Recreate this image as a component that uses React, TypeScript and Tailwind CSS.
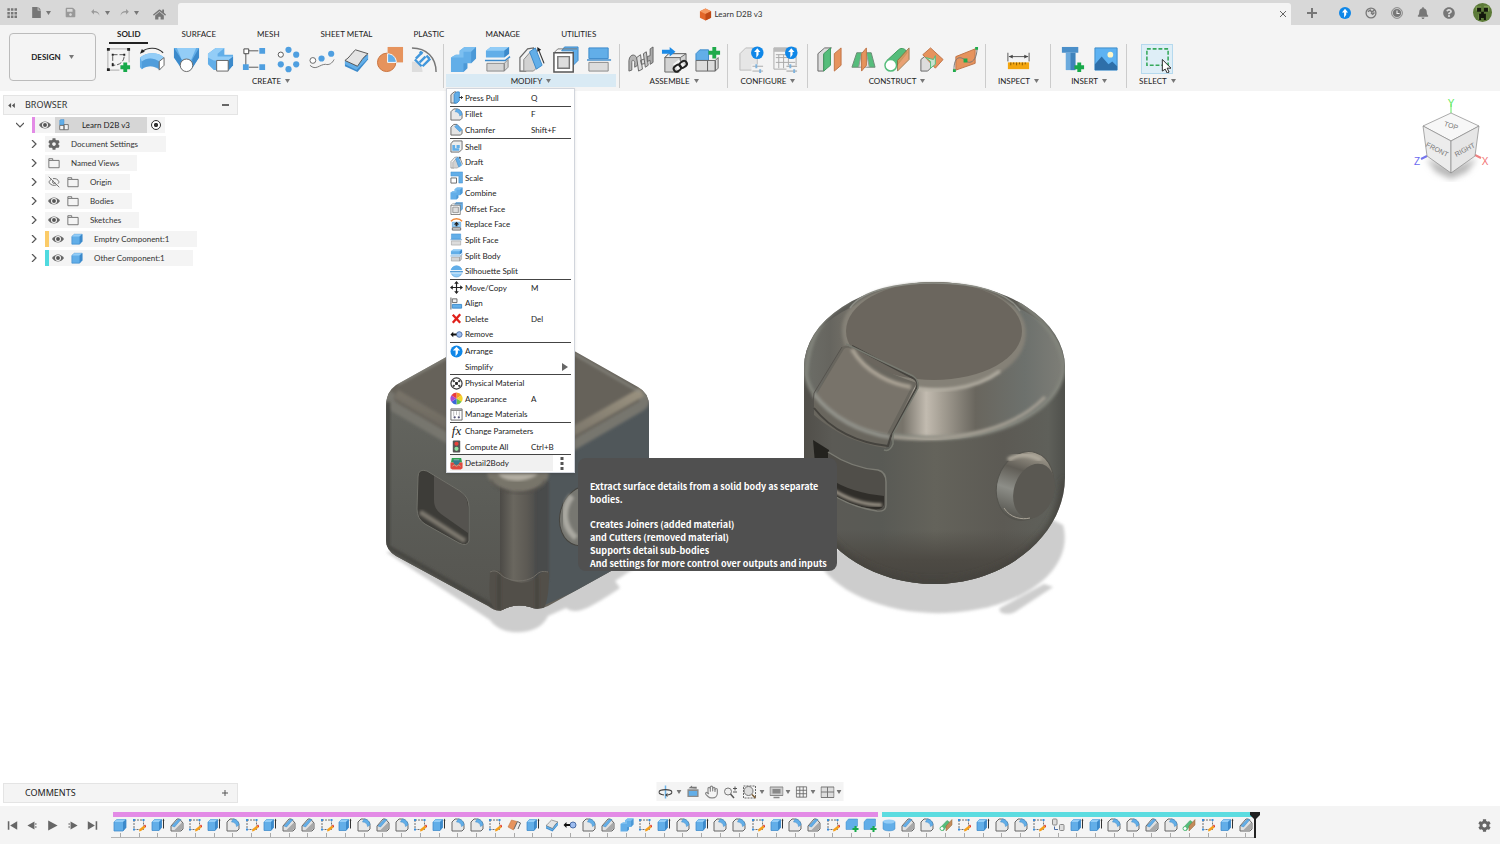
import { useState, type ReactNode } from 'react'
import { FaBell, FaCog, FaHome, FaQuestionCircle, FaSave } from 'react-icons/fa'
import { EyeOff, Hand } from 'lucide-react'

const B = '#62aee8'
const BL = '#93cdf7'
const BD = '#3c8acb'
const G = '#666666'
const L = '#dcdcdc'
const O = '#e6935d'
const GR = '#55bd7b'

const plus = <path d="M21 17v10M16 22h10" stroke="#17a94a" strokeWidth="4" />

const bolt = (cx: number, cy: number, r: number) => (
  <>
    <circle cx={cx} cy={cy} r={r} fill="#0f87e8" />
    <path
      d={`M${cx} ${cy - r * 0.7}l${r * 0.5} ${r * 0.6}h${-r * 0.3}v${r * 0.4}l${-r * 0.35} ${r * 0.5}v${-r * 0.9}h${-r * 0.35}z`}
      fill="#fff"
    />
  </>
)

// every drawing uses a 28 x 28 box
const drawings: Record<string, ReactNode> = {
  newSketch: (
    <>
      <path d="M3 3h22v14M3 3v22h12" stroke="#aaa" fill="none" />
      <path d="M8 9h12c0 7-4 11-12 11z" stroke="#555" fill="none" strokeDasharray="5 2" />
      <path d="M2 2h3v3H2zM23 2h3v3h-3zM2 23h3v3H2zM7 8h2v2H7zM7 18h2v3H7zM19 8h2v2h-2z" fill="#222" />
      {plus}
    </>
  ),
  revolve: (
    <>
      <path d="M3 6C9 1 19 1 25 7" stroke="#333" fill="none" strokeWidth="1.2" />
      <path d="M1 8l2-5 3 3z" fill="#222" />
      <path d="M1 12C8 6 20 6 26 12l-4 3v10C16 20 9 20 3 24l-2-2z" fill={B} />
      <path d="M1 12C8 6 20 6 26 12l-5 4C15 12 8 12 3 16z" fill={BL} />
      <path d="M3 16C8 12 15 12 21 16v9C15 20 9 20 3 24z" fill={BD} opacity=".45" />
      <path d="M21 16l5-4v8l-5 5z" fill="#fff" stroke={G} />
    </>
  ),
  loft: (
    <>
      <path d="M1 2h26v10l-8 12H9L1 12z" fill={B} />
      <path d="M1 2l8 12v9L1 12zM27 2l-7 12v9l7-11z" fill={BD} />
      <path d="M4 2h20l-5 12H9z" fill={BL} />
      <circle cx="14" cy="20" r="6.5" fill="#fff" stroke={G} />
    </>
  ),
  box: (
    <>
      <path d="M1 8l8-6h9v7h9v11l-5 5H7l-6-6z" fill={B} />
      <path d="M1 8l8-6h9l-7 6v3h16l-5 4H7l-6-3z" fill={BL} />
      <path d="M22 15l5-4v9l-5 6z" fill={BD} />
      <path d="M10 15h12v11H10z" fill="#fff" stroke={G} />
    </>
  ),
  rectPattern: (
    <>
      <path d="M8 5h10M5 8v12M8 22h10" stroke="#555" />
      <path d="M3 3h5v5H3z" fill="#fff" stroke="#444" />
      <path d="M19 2h6v6h-6zM2 19h6v6H2zM19 19h6v6h-6z" fill="#4f9fe0" />
    </>
  ),
  circPattern: (
    <g fill="#4f9fe0">
      <circle cx="14" cy="4" r="3.2" />
      <circle cx="22" cy="9" r="3.2" />
      <circle cx="22" cy="19" r="3.2" />
      <circle cx="14" cy="24" r="3.2" />
      <circle cx="6" cy="19" r="3.2" />
      <circle cx="6" cy="9" r="2.7" fill="#fff" stroke="#555" />
    </g>
  ),
  pathPattern: (
    <>
      <path d="M1 20c6 6 10-1 16-1 4 1 7-1 9-5" stroke="#777" fill="none" />
      <circle cx="4" cy="15" r="3" fill="#fff" stroke="#666" />
      <circle cx="13" cy="13" r="3.2" fill="#4f9fe0" />
      <circle cx="23" cy="8" r="3.2" fill="#4f9fe0" />
    </>
  ),
  thicken: (
    <>
      <path d="M2 16v5l13 6 11-13V9z" fill={BD} />
      <path d="M2 15v4l12 6 12-12V9l-9 7-2 5z" fill={B} />
      <path d="M2 15C7 12 9 7 13 4l13 4c-5 3-8 9-11 13z" fill="#e4e4e4" stroke="#555" />
    </>
  ),
  boundary: (
    <>
      <path d="M11 1h16v16H11z" fill={O} />
      <circle cx="10" cy="17" r="9.5" fill={O} stroke="#c9733c" />
      <path d="M11 8c5 0 9 4 9 9h-9z" fill={B} stroke="#fff" />
    </>
  ),
  pressArc: (
    <>
      <path d="M1 2C16 2 26 12 26 27" stroke="#777" fill="none" strokeWidth="1.5" />
      <path d="M1 16c6 0 11 4 11 11H1z" fill="#ddd" />
      <path d="M4 14l7 7M5 13l7-7M9 17l6-6M12 21l8-8M9 6l3 2M16 10l3 3" stroke="#4197dc" strokeWidth="2.5" fill="none" />
    </>
  ),
  combine: (
    <>
      <path d="M1 12l5-3h4V5l5-4h12v12l-5 5h-4v5l-4 4H1z" fill={B} />
      <path d="M1 12l5-3h4V5l5-4h12l-5 5h-8v6z" fill="#7cbff0" />
      <path d="M27 1v12l-5 5V6zM18 18v5l-4 4V18z" fill={BD} opacity=".6" />
    </>
  ),
  splitBody: (
    <>
      <path d="M2 5l5-4h19v7l-5 4H2z" fill={B} />
      <path d="M2 5l5-4h19l-5 4z" fill={BL} />
      <path d="M26 1v7l-5 4V5z" fill={BD} />
      <path d="M1 15h21l5-4" stroke={BD} strokeWidth="1.5" fill="none" />
      <path d="M3 18h18v8H3zM21 18l4-4v8l-4 4z" fill="#d5d5d5" stroke="#888" />
    </>
  ),
  draft: (
    <>
      <path d="M2 26V12l8-9 6-1v5L8 26z" fill="#f2f2f2" stroke={G} strokeWidth="1.2" />
      <path d="M6 26V14l7-8 6 17-3 3z" fill="#d2d2d2" stroke="#888" />
      <path d="M12 6l6-4 7 18-6 4z" fill={B} stroke={BD} />
      <path d="M21 3l6 15" stroke="#333" strokeWidth="1.2" />
      <path d="M20 1l4 3-4 2z" fill="#222" />
    </>
  ),
  offsetFace: (
    <>
      <path d="M10 5l3-4h14v14l-5 5V5z" fill={B} stroke={BD} />
      <path d="M2 7h20v20H2z" fill="#fff" stroke="#555" strokeWidth="1.5" />
      <path d="M6 11h12v12H6z" fill="#ddd" stroke="#777" strokeWidth="1.5" />
      <path d="M2 7l4-4h20" stroke="#777" fill="none" />
    </>
  ),
  splitFace: (
    <>
      <path d="M3 2h20v11H3z" fill={B} stroke={BD} />
      <path d="M1 14.500h25" stroke={BD} strokeWidth="1.5" />
      <path d="M3 17h20v9H3z" fill="#dcdcdc" stroke="#888" />
    </>
  ),
  joint: (
    <>
      <path d="M2 26V15c1-8 8-7 9 0v5l-3 2v-5c-1-3-3-3-3 0v8z" fill="#b5b5b5" stroke={G} />
      <path d="M10 12l4-3 2 15-4 2zM14 15l5-2v5l-4 1z" fill="#ddd" stroke={G} />
      <path d="M17 8l3-2 2 14-3 2z" fill="#c6c6c6" stroke={G} />
      <path d="M21 11l3-1V3l3-2v16l-3 2v-4l-3 1z" fill="#aaa" stroke={G} />
    </>
  ),
  asBuilt: (
    <>
      <path d="M4 12l4-4h18v13l-6 6H4z" fill="#d3d3d3" stroke={G} />
      <path d="M4 12h16l6-4H8zM20 12v15" fill="#eee" stroke={G} />
      <path d="M1 4h8V1l6 5-6 5V8H1z" fill="#1d8be6" />
      <path d="M15 22l6-5M18 26l7-5" stroke="#f4f4f4" strokeWidth="8" />
      <rect x="13" y="20" width="8" height="6" rx="3" transform="rotate(-35 17 23)" fill="none" stroke="#222" strokeWidth="2" />
      <rect x="19" y="16" width="8" height="6" rx="3" transform="rotate(-35 23 19)" fill="none" stroke="#222" strokeWidth="2" />
    </>
  ),
  newComponent: (
    <>
      <path d="M1 8l4-4h9v11H1z" fill={B} stroke={BD} />
      <path d="M1 15h12v11H1zM13 15h8v11h-8zM21 15l3-3v11l-3 3z" fill="#ddd" stroke={G} />
      <path d="M20 1v12M14 7h12" stroke="#1faa4b" strokeWidth="4" />
    </>
  ),
  config: (
    <>
      <path d="M2 25V8l6-6h12v23z" fill="#e6e6e6" stroke="#bbb" />
      <path d="M14 19h13v9H14z" fill="#f4f4f4" />
      <path d="M15 21h11M15 26h11" stroke="#aaa" />
      <path d="M19 19v4M23 24v4" stroke="#7fb3dd" strokeWidth="2" />
      {bolt(20, 7, 6.5)}
    </>
  ),
  configTable: (
    <>
      <path d="M2 2h23v22H2z" fill="#f4f4f4" stroke="#aaa" />
      <path d="M2 2h23v4H2z" fill="#bbb" />
      <path d="M7 9v14M12 9v14M17 9v14M4 12h20M4 17h20M4 9h20" stroke="#aaa" />
      <path d="M15 20h12v8H15z" fill="#f4f4f4" />
      <path d="M15 21h11M15 26h11" stroke="#999" />
      <path d="M19 19v4M23 24v4" stroke="#7fb3dd" strokeWidth="2" />
      {bolt(20, 7, 6.5)}
    </>
  ),
  offsetPlane: (
    <>
      <path d="M2 8l7-6h7L8 9v17H2z" fill="#ddd" stroke={G} />
      <path d="M8 8l7-6v18l-7 6z" fill={GR} stroke="#3d9a5e" />
      <path d="M19 8l7-6v18l-7 6z" fill={O} stroke="#c07446" />
    </>
  ),
  midPlane: (
    <>
      <path d="M2 22L7 7h6l-3 15zM26 22L22 7h-6l2 15z" fill={GR} stroke="#6d8a76" />
      <path d="M9 22l3-15h5l3 15z" fill="#e2e2e2" stroke="#999" />
      <path d="M12 8l5-6v18l-5 6z" fill={O} stroke="#c07446" />
    </>
  ),
  tangentPlane: (
    <>
      <path d="M3 15L15 4c3-3 8-1 9 3L12 22z" fill={GR} stroke="#3d9a5e" />
      <circle cx="7" cy="20" r="6" fill="#fff" stroke={GR} strokeWidth="1.5" />
      <path d="M14 15L26 2v12L14 26z" fill={O} stroke="#8f6a3a" opacity=".85" />
    </>
  ),
  edgePlane: (
    <>
      <path d="M3 26V14l5-4h8v10l-6 6z" fill="#ddd" stroke={G} />
      <path d="M5 9l8-7 13 12-8 9z" fill={O} stroke="#c07446" />
      <path d="M8 12l8 2 2-4v9l-5 4v-7z" fill="#c9e3d1" stroke={GR} />
    </>
  ),
  pathPlane: (
    <>
      <path d="M4 11L24 3v15L4 25z" fill={O} stroke="#c07446" />
      <path d="M2 25c0-16 8-14 12-10 5 5 12 0 12-13" stroke="#777" fill="none" />
      <path d="M1 24h3v3H1zM12 13h4v4h-4zM24 1h3v3h-3z" fill="#1faa4b" />
    </>
  ),
  measure: (
    <>
      <path d="M3 7v9M25 7v9M4 11h20" stroke="#555" />
      <path d="M4 11l4-2v4zM24 11l-4-2v4z" fill="#444" />
      <path d="M3 17h22v7H3z" fill="#f3a50e" />
      <path d="M6 17v3M9 17v2M12 17v3M15 17v2M18 17v3M21 17v2" stroke="#8a5a00" />
    </>
  ),
  insertBolt: (
    <>
      <path d="M3 1h17v6H3z" fill="#4b8fc9" />
      <path d="M7 7h10v18H7z" fill="#6baadd" />
      <path d="M12 7h5v18h-5z" fill="#3f82bb" />
      {plus}
    </>
  ),
  insertImage: (
    <>
      <path d="M2 2h23v23H2z" fill="#5db2f2" stroke="#3d8cc9" />
      <circle cx="18" cy="9" r="3" fill="#fff7c8" />
      <path d="M2 19l7-8 7 8 4-3 5 5v4H2z" fill="#2e6fa9" />
    </>
  ),
  select: (
    <>
      <path d="M3 3h22v17H3z" fill="none" stroke="#36a95c" strokeWidth="1.6" strokeDasharray="4 2" />
      <path d="M19 14v12l3-2 2 4 2-1-2-4h4z" fill="#fff" stroke="#222" />
    </>
  ),
  pressPull: (
    <>
      <path d="M2 26V8l7-6h4v24z" fill={L} stroke={G} strokeWidth="2" />
      <path d="M9 26V7l5-5h6v19l-5 5z" fill={B} stroke={BD} strokeWidth="2" />
      <path d="M20 14h7M24 11l3 3-3 3" stroke="#222" strokeWidth="2" fill="none" />
    </>
  ),
  fillet: (
    <>
      <path d="M2 26V8l6-6h5c8 0 13 6 13 13v7l-4 4z" fill="#e8e8e8" stroke={G} strokeWidth="2" />
      <path d="M11 8l3-6c7 0 12 6 12 12l-5 3C21 12 17 8 11 8z" fill={B} stroke={BD} />
    </>
  ),
  chamferMenu: (
    <>
      <path d="M2 26V9l6-6h7l11 12v8l-4 3z" fill="#e4e4e4" stroke={G} strokeWidth="2" />
      <path d="M10 8l5-5 11 11-5 5z" fill={B} stroke={BD} />
    </>
  ),
  chamfer: (
    <>
      <path d="M2 26V16L14 2h5l7 8v12l-4 4z" fill="#e0e0e0" stroke={G} strokeWidth="2" />
      <path d="M4 16L16 3h6L9 18z" fill={B} stroke={BD} />
      <path d="M8 25L24 9v13l-3 3z" fill="#a9a9a9" />
    </>
  ),
  shell: (
    <>
      <path d="M2 8l5-6h19v18l-6 6H2z" fill="#eee" stroke={G} strokeWidth="2" />
      <path d="M5 11h6v7h9v5H5zM14 11h7v6h-7z" fill={B} />
    </>
  ),
  scale: (
    <>
      <path d="M2 2h25v24h-8V11H2z" fill={B} stroke={BD} />
      <path d="M2 15h12v11H2z" fill="#fff" stroke={G} strokeWidth="2" />
    </>
  ),
  replaceFace: (
    <>
      <path d="M2 7C8 0 20 0 26 7" stroke="#f08a3a" fill="none" strokeWidth="3" />
      <path d="M5 9h18v10H5z" fill={BL} stroke={BD} />
      <path d="M14 8l6 6h-4v4h-4v-4H8z" fill="#222" />
      <path d="M5 21h18v5H5z" fill={L} stroke={G} strokeWidth="2" />
    </>
  ),
  silhouette: (
    <>
      <circle cx="14" cy="14" r="12" fill={BL} stroke={BD} />
      <path d="M2 13a12 12 0 0 1 24 0z" fill={B} />
      <path d="M0 12h28M2 17h24" stroke="#fff" strokeWidth="2" />
      <path d="M0 14.500h28" stroke={BD} strokeWidth="2" />
    </>
  ),
  move: (
    <>
      <path d="M14 4v20M4 14h20" stroke="#222" strokeWidth="2.500" />
      <path d="M14 0l5 6H9zM14 28l5-6H9zM0 14l6-5v10zM28 14l-6-5v10z" fill="#222" />
    </>
  ),
  align: (
    <>
      <path d="M2 1v26" stroke="#555" strokeWidth="2" />
      <path d="M5 4h10v8H5z" fill="#eee" stroke={G} strokeWidth="2" />
      <path d="M5 16h20v8H5z" fill={B} stroke={BD} strokeWidth="2" />
    </>
  ),
  delete: <path d="M6 6l16 17M22 5L6 23" stroke="#e0211b" strokeWidth="5" />,
  remove: (
    <>
      <circle cx="20" cy="14" r="6" fill="#9dbdf0" stroke="#4b6ea8" strokeWidth="2" />
      <path d="M1 14l6-6v4h7v4H7v4z" fill="#111" />
    </>
  ),
  arrange: (
    <>
      <circle cx="14" cy="14" r="13" fill="#0f87e8" />
      <path d="M14 4l8 8h-5v6l-5 6V12H6z" fill="#fff" />
    </>
  ),
  physical: (
    <>
      <circle cx="14" cy="14" r="12" fill="#fff" stroke="#333" strokeWidth="2.500" />
      <path d="M6 6l16 16M22 6L6 22" stroke="#777" strokeWidth="2" />
      <circle cx="14" cy="14" r="3" fill="#222" />
      <circle cx="8" cy="9" r="2.5" fill="#444" />
      <circle cx="20" cy="9" r="2.5" fill="#444" />
      <circle cx="8" cy="19" r="2.5" fill="#444" />
      <circle cx="20" cy="19" r="2.5" fill="#444" />
    </>
  ),
  appearance: (
    <>
      <path d="M14 14V1a13 13 0 0 1 11 6z" fill="#f59b23" />
      <path d="M14 14L25 7a13 13 0 0 1 0 14z" fill="#f3d32b" />
      <path d="M14 14l11 7a13 13 0 0 1-11 6z" fill="#6cc24a" />
      <path d="M14 14v13a13 13 0 0 1-11-6z" fill="#3a66d8" />
      <path d="M14 14L3 21A13 13 0 0 1 3 7z" fill="#a94bd0" />
      <path d="M14 14L3 7a13 13 0 0 1 11-6z" fill="#ea3c3c" />
    </>
  ),
  manage: (
    <>
      <path d="M2 2h24v24H2z" fill="#fff" stroke={G} strokeWidth="2" />
      <path d="M2 5h24" stroke="#888" strokeWidth="3" />
      <path d="M8 7v10M14 7v8M20 7v10" stroke="#bbb" strokeWidth="2" />
      <circle cx="10" cy="20" r="2.500" fill="#557" />
      <circle cx="19" cy="20" r="2.500" fill="#557" />
    </>
  ),
  compute: (
    <>
      <rect x="6" y="1" width="16" height="26" rx="2" fill="#555" />
      <circle cx="14" cy="8" r="4.500" fill="#e8423a" />
      <circle cx="14" cy="19" r="4.500" fill="#8fe0a0" />
    </>
  ),
  detail: (
    <>
      <path d="M4 2h20l2 10H2z" fill="#2f9e52" />
      <path d="M1 12h26v12l-4 3H5l-4-3z" fill="#e0483e" />
      <path d="M6 8c4-4 12-4 16 0l-3 7-5 3-5-3z" fill="#357a8e" />
      <path d="M8 6h12M5 20l4-3 5 3 5-3 4 3" stroke="#9fd6b4" fill="none" strokeWidth="1.500" />
    </>
  ),
  solid: (
    <>
      <path d="M2 8l6-5h18v16l-6 7H2z" fill={B} stroke={BD} strokeWidth="1.500" />
      <path d="M2 8l6-5h18l-6 5z" fill={BL} />
      <path d="M26 3v16l-6 7V8z" fill={BD} />
    </>
  ),
  sketch: (
    <>
      <path d="M4 4h19v19H4z" fill="none" stroke="#444" strokeWidth="1.500" strokeDasharray="4 2" />
      <path d="M2 2h4v4H2zM21 2h4v4h-4zM2 21h4v4H2z" fill="#3b8edb" />
      <path d="M14 27l1-5 9-7 3 4-9 7z" fill="#f6a01a" />
      <path d="M24 15l2-2 3 4-2 2z" fill="#e0392b" />
    </>
  ),
  extrude: (
    <>
      <path d="M2 8l5-5h14v16l-5 6H2z" fill={B} stroke={BD} strokeWidth="1.500" />
      <path d="M2 8l5-5h14l-5 5z" fill={BL} />
      <path d="M21 3v16l-5 6V8z" fill={BD} />
      <path d="M25 4v17" stroke="#333" strokeWidth="2" />
      <path d="M25 1l2 4h-4z" fill="#333" />
    </>
  ),
  patch: (
    <>
      <path d="M2 18L9 4l11 3-7 17z" fill={O} stroke="#b96a35" />
      <path d="M14 22l7-15 6 3-5 12" fill="#eee" stroke={G} strokeWidth="2" />
    </>
  ),
  plane: (
    <>
      <path d="M2 20L16 5l5 3L9 25z" fill={GR} stroke="#3d9a5e" />
      <circle cx="6" cy="21" r="4" fill="#fff" stroke={GR} strokeWidth="2" />
      <path d="M14 16L26 3v11L14 26z" fill="#c48a5a" stroke="#8f6a3a" />
    </>
  ),
  compPlus: (
    <>
      <path d="M2 8l5-6h18v14l-6 7H2z" fill={B} stroke={BD} />
      <path d="M21 16v12M15 22h12" stroke="#17a94a" strokeWidth="4" />
    </>
  ),
  cylinder: (
    <>
      <path d="M2 7v15c3 5 21 5 24 0V7z" fill={B} stroke={BD} />
      <ellipse cx="14" cy="7" rx="12" ry="4" fill={BL} />
    </>
  ),
  pair: (
    <>
      <rect x="3" y="2" width="9" height="12" rx="2" fill="#ddd" stroke="#888" strokeWidth="2" />
      <rect x="17" y="13" width="9" height="12" rx="2" fill="#ddd" stroke="#888" strokeWidth="2" />
      <path d="M7 17v6h7" stroke="#4b6ea8" fill="none" strokeWidth="2" />
    </>
  ),
  comp: (
    <>
      <path d="M4 3l3-2h7v13H4z" fill={B} stroke={BD} />
      <path d="M4 15h10v10H4zM14 13h10v12H14z" fill="#f4f4f4" stroke={G} strokeWidth="2" />
    </>
  ),
  folder: <path d="M2 8V4h9v4h15v17H2V8h9" fill="none" stroke="#666" strokeWidth="2" />,
  eye: (
    <>
      <path d="M0 14C7 3 21 3 28 14 21 25 7 25 0 14z" fill="#666" />
      <circle cx="14" cy="14" r="7" fill="#f4f4f4" />
      <circle cx="14" cy="14" r="4.500" fill="#555" />
    </>
  ),
  orbit: (
    <>
      <path d="M14 1v26" stroke="#6db3e8" strokeWidth="3" />
      <path d="M11 20C-4 18-2 9 14 9s17 9 4 11" fill="none" stroke="#444" strokeWidth="2.500" />
      <path d="M18 16v8l-5-4z" fill="#444" />
    </>
  ),
  lookAt: (
    <>
      <path d="M2 9h24v17H2z" fill="#8a8a8a" />
      <path d="M5 13h18v10H5z" fill={B} />
      <path d="M4 7l8-6v3h10v4z" fill="#777" />
    </>
  ),
  zoom: (
    <>
      <circle cx="9" cy="13" r="7" fill="#eee" stroke="#777" strokeWidth="2" />
      <path d="M14 18l7 8" stroke="#555" strokeWidth="3" />
      <path d="M19 7h8M23 3v8M19 14h8" stroke="#555" strokeWidth="2" />
    </>
  ),
  fit: (
    <>
      <path d="M2 2h24v24H2z" fill="none" stroke="#666" strokeWidth="2" strokeDasharray="4 2" />
      <circle cx="12" cy="12" r="9" fill="#ddd" stroke="#777" strokeWidth="2" />
      <path d="M19 19l7 7" stroke="#7a5a30" strokeWidth="3" />
    </>
  ),
  display: (
    <>
      <path d="M1 4h26v17H1z" fill="#ccc" stroke="#888" strokeWidth="2" />
      <path d="M6 8h16v9H6z" fill="#888" />
      <path d="M8 25h12" stroke="#888" strokeWidth="3" />
    </>
  ),
  grid: <path d="M2 2h24v24H2zM10 2v24M18 2v24M2 10h24M2 18h24" fill="none" stroke="#666" strokeWidth="2" />,
  viewports: <path d="M1 4h26v21H1zM14 4v21M1 14h26" fill="#ddd" stroke="#777" strokeWidth="2" />,
  undo: <path d="M10 5L3 12l7 7v-5c7 0 11 1 14 8 0-8-5-12-14-12z" fill="#999" />,
  redo: <path d="M18 5l7 7-7 7v-5c-7 0-11 1-14 8 0-8 5-12 14-12z" fill="#999" />,
  apps: <path d="M1 1h7v7H1zM11 1h7v7h-7zM21 1h7v7h-7zM1 11h7v7H1zM11 11h7v7h-7zM21 11h7v7h-7zM1 21h7v7H1zM11 21h7v7h-7zM21 21h7v7h-7z" fill="#777" />,
  file: <path d="M3 0h14v9h8v19H3zM19 0l6 7h-6z" fill="#777" />,
  bolt: bolt(14, 14, 14),
  extension: (
    <>
      <circle cx="14" cy="14" r="11.500" fill="none" stroke="#777" strokeWidth="3" />
      <path d="M7 11l5-4 4 5 6-5M14 14l4 3 4-4" stroke="#777" strokeWidth="3.500" fill="none" />
    </>
  ),
  clock: (
    <>
      <circle cx="14" cy="14" r="12.500" fill="none" stroke="#777" strokeWidth="2" />
      <circle cx="14" cy="14" r="9.500" fill="#777" />
      <path d="M14 8v7h6" stroke="#eee" strokeWidth="2.500" fill="none" />
    </>
  ),
  avatar: (
    <>
      <circle cx="14" cy="14" r="14" fill="#5c7a38" />
      <path d="M4 5h8v6H4zM16 4h8v8h-8zM8 17h5v7H8z" fill="#7f9d55" />
      <path d="M6 7h6v6H6zM16 7h6v6h-6zM12 13h4v3h3v9h-3v-3h-4v3H9v-9h3z" fill="#14180c" />
    </>
  ),
  doc: (
    <>
      <path d="M14 1l12 6v14l-12 6-12-6V7z" fill="#e3672a" />
      <path d="M14 1l12 6-12 6L2 7z" fill="#f59a62" />
      <path d="M14 13l12-6v14l-12 6z" fill="#bf4a16" />
    </>
  ),
  first: <path d="M2 3h4v22H2zM26 3v22L8 14z" fill="#666" />,
  prev: <path d="M19 4v20L1 14zM21 8h3v4h-3zM21 16h3v4h-3z" fill="#666" />,
  play: <path d="M3 1l24 13L3 27z" fill="#666" />,
  next: <path d="M9 4v20l18-10zM4 8h3v4H4zM4 16h3v4H4z" fill="#666" />,
  last: <path d="M22 3h4v22h-4zM2 3v22l18-11z" fill="#666" />,
}

function Icon({ name, className }: { name: string; className: string }) {
  return (
    <svg viewBox="0 0 28 28" fill="none" aria-hidden="true" className={`shrink-0 ${className}`}>
      {drawings[name]}
    </svg>
  )
}

function Caret() {
  return (
    <svg viewBox="0 0 10 8" aria-hidden="true" className="w-[5px] h-1 shrink-0">
      <path d="M0 0h10L5 8z" fill="#777" />
    </svg>
  )
}

const tabs = ['SOLID', 'SURFACE', 'MESH', 'SHEET METAL', 'PLASTIC', 'MANAGE', 'UTILITIES']

const groups = [
  {
    label: 'CREATE',
    pad: 'pr-[3px]',
    icons: ['newSketch', 'revolve', 'loft', 'box', 'rectPattern', 'circPattern', 'pathPattern', 'thicken', 'boundary', 'pressArc'],
  },
  { label: 'MODIFY', pad: 'pl-[2px] pr-1', icons: ['combine', 'splitBody', 'draft', 'offsetFace', 'splitFace'] },
  { label: 'ASSEMBLE', pad: 'px-[3px]', icons: ['joint', 'asBuilt', 'newComponent'] },
  { label: 'CONFIGURE', pad: 'px-1.5', icons: ['config', 'configTable'] },
  { label: 'CONSTRUCT', pad: 'px-1', icons: ['offsetPlane', 'midPlane', 'tangentPlane', 'edgePlane', 'pathPlane'] },
  { label: 'INSPECT', pad: 'px-3', icons: ['measure'] },
  { label: 'INSERT', pad: 'px-1', icons: ['insertBolt', 'insertImage'] },
  { label: 'SELECT', pad: 'px-3', icons: ['select'] },
]

type MenuItem = { label: string; icon?: string; keys?: string; end?: boolean }

const menu: MenuItem[] = [
  { label: 'Press Pull', icon: 'pressPull', keys: 'Q', end: true },
  { label: 'Fillet', icon: 'fillet', keys: 'F' },
  { label: 'Chamfer', icon: 'chamferMenu', keys: 'Shift+F', end: true },
  { label: 'Shell', icon: 'shell' },
  { label: 'Draft', icon: 'draft' },
  { label: 'Scale', icon: 'scale' },
  { label: 'Combine', icon: 'combine' },
  { label: 'Offset Face', icon: 'offsetFace' },
  { label: 'Replace Face', icon: 'replaceFace' },
  { label: 'Split Face', icon: 'splitFace' },
  { label: 'Split Body', icon: 'splitBody' },
  { label: 'Silhouette Split', icon: 'silhouette', end: true },
  { label: 'Move/Copy', icon: 'move', keys: 'M' },
  { label: 'Align', icon: 'align' },
  { label: 'Delete', icon: 'delete', keys: 'Del' },
  { label: 'Remove', icon: 'remove', end: true },
  { label: 'Arrange', icon: 'arrange' },
  { label: 'Simplify', end: true },
  { label: 'Physical Material', icon: 'physical' },
  { label: 'Appearance', icon: 'appearance', keys: 'A' },
  { label: 'Manage Materials', icon: 'manage', end: true },
  { label: 'Change Parameters', icon: 'fx' },
  { label: 'Compute All', icon: 'compute', keys: 'Ctrl+B', end: true },
  { label: 'Detail2Body', icon: 'detail' },
]

function ModifyMenu() {
  return (
    <div className="absolute left-[2px] top-full mt-px z-20 w-[129px] h-[385px] flex flex-col bg-white border border-gray-300 shadow-sm px-[3px] py-px">
      {menu.map(item => (
        <div
          key={item.label}
          className={`relative flex flex-1 items-center ${item.end ? 'border-b border-[#444]' : ''} ${item.label === 'Detail2Body' ? 'bg-[#f1f1f1]' : ''}`}
        >
          <button className="flex flex-1 items-center gap-[2px] text-left">
            {item.icon === 'fx' ? (
              <span className="w-[13px] text-center font-['Liberation_Serif',serif] italic text-[13px] leading-3">fx</span>
            ) : item.icon ? (
              <Icon name={item.icon} className="size-[13px]" />
            ) : (
              <span className="w-[13px]" />
            )}
            <span className="w-[64px] whitespace-nowrap">{item.label}</span>
            <span>{item.keys}</span>
          </button>
          {item.label === 'Simplify' && (
            <svg viewBox="0 0 6 8" className="w-[6px] h-2 mr-[3px]" aria-hidden="true">
              <path d="M0 0l6 4-6 4z" fill="#666" />
            </svg>
          )}
          {item.label === 'Detail2Body' && (
            <>
              <button aria-label="More" className="w-[18px] self-stretch bg-white flex justify-center items-center">
                <svg viewBox="0 0 4 14" className="w-1 h-3.5">
                  <path d="M.5 1h3v3h-3zM.5 6h3v3h-3zM.5 11h3v3h-3z" fill="#555" />
                </svg>
              </button>
              <Tooltip />
            </>
          )}
        </div>
      ))}
    </div>
  )
}

function Tooltip() {
  return (
    <div
      role="tooltip"
      className="absolute left-full top-[3px] ml-[7px] w-[259px] h-[113px] rounded-lg bg-[#505050] px-3 pt-[22px] text-white font-bold font-['Noto_Sans_CJK_SC',sans-serif] text-[9px] leading-[13px] whitespace-nowrap"
    >
      <p>Extract surface details from a solid body as separate</p>
      <p>bodies.</p>
      <p className="mt-3">Creates Joiners (added material)</p>
      <p>and Cutters (removed material)</p>
      <p>Supports detail sub-bodies</p>
      <p>And settings for more control over outputs and inputs</p>
    </div>
  )
}

function TitleBar() {
  return (
    <header className="flex h-[25px] bg-[#d8d8d8] text-[#777]">
      <nav className="flex w-[178px] items-center gap-[14px] pl-[7px]">
        <button aria-label="Data panel"><Icon name="apps" className="size-[10px]" /></button>
        <button aria-label="File" className="flex items-center gap-1"><Icon name="file" className="size-[11px]" /><Caret /></button>
        <button aria-label="Save"><FaSave className="size-[11px] text-[#999]" /></button>
        <span className="flex gap-[9px]">
          <button aria-label="Undo" className="flex items-center gap-1"><Icon name="undo" className="size-[11px]" /><Caret /></button>
          <button aria-label="Redo" className="flex items-center gap-1"><Icon name="redo" className="size-[11px]" /><Caret /></button>
        </span>
        <button aria-label="Home" className="pt-1"><FaHome className="size-[13px]" /></button>
      </nav>
      <div className="mt-[3px] flex flex-1 items-center justify-center gap-1 rounded-t-[3px] bg-[#f4f4f4] pl-2 pr-1 text-[#333]">
        <span className="flex flex-1 items-center justify-center gap-[3px]">
          <Icon name="doc" className="size-[13px]" />
          Learn D2B v3
        </span>
        <button aria-label="Close tab">
          <svg viewBox="0 0 8 8" className="size-2"><path d="M1 1l6 6M7 1L1 7" stroke="#666" /></svg>
        </button>
      </div>
      <div className="flex w-[209px] items-center gap-[14px] pl-[15px]">
        <button aria-label="New tab" className="mr-[7px]">
          <svg viewBox="0 0 12 12" className="size-3"><path d="M6 1v10M1 6h10" stroke="#777" strokeWidth="2" /></svg>
        </button>
        <button aria-label="Updates"><Icon name="bolt" className="size-3" /></button>
        <button aria-label="Extensions"><Icon name="extension" className="size-3" /></button>
        <button aria-label="Job status"><Icon name="clock" className="size-3" /></button>
        <button aria-label="Notifications"><FaBell className="size-3" /></button>
        <button aria-label="Help"><FaQuestionCircle className="size-3" /></button>
        <button aria-label="Account" className="ml-1"><Icon name="avatar" className="size-[19px]" /></button>
      </div>
    </header>
  )
}

function Toolbar() {
  const [tab, setTab] = useState('SOLID')

  return (
    <div className="flex h-[66px] bg-[#f4f4f4]">
      <div className="w-[101px] shrink-0 pl-[9px] pt-2">
        <button className="flex h-12 w-[87px] items-center justify-center gap-2 rounded border border-[#bbb] font-bold">
          DESIGN <Caret />
        </button>
      </div>
      <div>
        <div className="flex h-[19px] gap-[41px] pl-4">
          {tabs.map(t => (
            <button
              key={t}
              onClick={() => setTab(t)}
              className={t === tab ? '-mx-2 border-b-2 border-[#222] px-2 font-bold text-[#222]' : 'pb-[2px]'}
            >
              {t}
            </button>
          ))}
        </div>
        <div className="flex">
          {groups.map(g => (
            <div key={g.label} className={`relative flex flex-col ${g.pad}`}>
              <div className="flex h-[30px] justify-center">
                {g.icons.map(name => (
                  <button
                    key={name}
                    aria-label={name}
                    className={`flex items-center justify-center ${name === 'select' ? 'w-8 border border-[#b5d9ee] bg-[#deeef7]' : 'w-[34px]'}`}
                  >
                    <Icon name={name} className="size-[27px]" />
                  </button>
                ))}
              </div>
              <button
                className={`flex h-[13px] items-center justify-center gap-1 ${g.label === 'MODIFY' ? 'bg-[#d9eaf4]' : ''}`}
              >
                {g.label} <Caret />
              </button>
              {g.label !== 'SELECT' && <span className="absolute right-0 top-0 h-11 w-px bg-[#ccc]" />}
              {g.label === 'MODIFY' && <ModifyMenu />}
            </div>
          ))}
        </div>
      </div>
    </div>
  )
}

const tree = [
  { label: 'Document Settings', kind: 'settings', pad: 'pr-7' },
  { label: 'Named Views', kind: 'folder', pad: 'pr-[18px]' },
  { label: 'Origin', kind: 'hidden', pad: 'pr-[18px]' },
  { label: 'Bodies', kind: 'shown', pad: 'pr-[18px]' },
  { label: 'Sketches', kind: 'shown', pad: 'pr-[18px]' },
  { label: 'Emptry Component:1', kind: 'comp', pad: 'pr-7', bar: 'bg-[#fbcb68]' },
  { label: 'Other Component:1', kind: 'comp', pad: 'pr-7', bar: 'bg-[#4fdadf]' },
]

function Chevron({ open }: { open?: boolean }) {
  return (
    <svg viewBox="0 0 8 8" className={`size-2 shrink-0 ${open ? 'rotate-90' : ''}`} aria-hidden="true">
      <path d="M2 0l4 4-4 4" fill="none" stroke="#555" strokeWidth="1.200" />
    </svg>
  )
}

function Browser() {
  return (
    <section className="relative w-[235px] text-[#333]">
      <div className="flex h-5 items-center border border-[#e4e4e4] bg-[#f4f4f4] pl-1 pr-2">
        <button aria-label="Collapse" className="w-[17px]">
          <svg viewBox="0 0 8 6" className="h-[5px] w-[7px]"><path d="M3.500 0v6L0 3zM8 0v6L4.500 3z" fill="#555" /></svg>
        </button>
        <h2 className="flex-1 font-['Noto_Sans',sans-serif] text-[9px]">BROWSER</h2>
        <button aria-label="Minimize" className="h-[2px] w-[7px] bg-[#666]" />
      </div>
      <ul className="mt-[2px] flex flex-col gap-[3px]">
        <li className="flex h-4 items-center">
          <button aria-label="Collapse root" className="ml-[13px] mr-2 flex"><Chevron open /></button>
          <span className="h-full w-[3px] bg-[#e38be6]" />
          <span className="flex h-full items-center bg-[#f4f4f4] pl-1 pr-1">
            <Icon name="eye" className="size-3" />
            <span className="ml-1 mr-1 flex h-full w-[92px] items-center gap-3 bg-[#d6d6d6] pl-[3px] text-[#222]">
              <Icon name="comp" className="size-3" />
              Learn D2B v3
            </span>
            <input type="radio" aria-label="Activate component" defaultChecked className="size-[10px] appearance-none rounded-full border border-[#333] bg-[radial-gradient(#333_35%,white_40%)]" />
          </span>
        </li>
        {tree.map(row => (
          <li key={row.label} className="flex h-4 items-center">
            <button aria-label={`Expand ${row.label}`} className="ml-[27px] mr-[7px] flex"><Chevron /></button>
            {row.bar && <span className={`h-full w-1 ${row.bar}`} />}
            <span className={`flex h-full items-center gap-[7px] bg-[#f4f4f4] pl-[3px] ${row.pad}`}>
              {row.kind === 'settings' && <FaCog className="size-3 text-[#666]" />}
              {row.kind === 'hidden' && <EyeOff className="size-3 text-[#777]" />}
              {(row.kind === 'shown' || row.kind === 'comp') && <Icon name="eye" className="size-3" />}
              {row.kind !== 'settings' && <Icon name={row.kind === 'comp' ? 'solid' : 'folder'} className="size-3" />}
              <span className="pl-1">{row.label}</span>
            </span>
          </li>
        ))}
      </ul>
    </section>
  )
}

function Scene() {
  return (
    <svg viewBox="380 270 700 370" className="absolute left-[380px] top-[179px] w-[700px] h-[370px]" aria-label="Model view">
      <defs>
        <linearGradient id="side" x1="0" x2="1">
          <stop offset="0" stopColor="#4f4d48" />
          <stop offset=".12" stopColor="#5b5a55" />
          <stop offset=".3" stopColor="#595a55" />
          <stop offset=".5" stopColor="#64635b" />
          <stop offset=".75" stopColor="#5c5a54" />
          <stop offset=".92" stopColor="#5f605a" />
          <stop offset="1" stopColor="#4a4b47" />
        </linearGradient>
        <linearGradient id="cone" x1="0" x2="1">
          <stop offset="0" stopColor="#6d6e68" />
          <stop offset=".1" stopColor="#66655f" />
          <stop offset=".2" stopColor="#77736a" />
          <stop offset=".38" stopColor="#77736a" />
          <stop offset=".47" stopColor="#c2bbb0" />
          <stop offset=".53" stopColor="#a59f94" />
          <stop offset=".66" stopColor="#69665e" />
          <stop offset=".85" stopColor="#6d716d" />
          <stop offset="1" stopColor="#7e7e77" />
        </linearGradient>
        <linearGradient id="leftFace" x1="0" y1="0" x2="0" y2="1">
          <stop offset="0" stopColor="#64655f" />
          <stop offset=".5" stopColor="#5b5c57" />
          <stop offset="1" stopColor="#55544f" />
        </linearGradient>
        <linearGradient id="column" x1="0" x2="1">
          <stop offset="0" stopColor="#4c4a46" />
          <stop offset=".35" stopColor="#6a675f" />
          <stop offset=".7" stopColor="#5d5a54" />
          <stop offset="1" stopColor="#4a4b4a" />
        </linearGradient>
        <linearGradient id="band" x1="0" y1="1" x2="1" y2="0">
          <stop offset="0" stopColor="#8f887b" />
          <stop offset=".3" stopColor="#6b675f" />
          <stop offset="1" stopColor="#99917f" />
        </linearGradient>
        <linearGradient id="under" x1="0" y1="0" x2="0" y2="1">
          <stop offset="0" stopColor="#4d4a44" stopOpacity="0" />
          <stop offset=".5" stopColor="#4d4a44" />
          <stop offset="1" stopColor="#45433e" />
        </linearGradient>
        <linearGradient id="knob" x1="0" y1="0" x2="0" y2="1">
          <stop offset="0" stopColor="#a29c8f" />
          <stop offset=".3" stopColor="#605d56" />
          <stop offset=".6" stopColor="#8d8e88" />
          <stop offset="1" stopColor="#55544e" />
        </linearGradient>
        <filter id="soft"><feGaussianBlur stdDeviation="1.500" /></filter>
        <filter id="softer"><feGaussianBlur stdDeviation="3" /></filter>
        <clipPath id="body">
          <path d="M804 367A130.500 85 0 0 1 1065 367V478C1064 538 1003 584 934 584 865 584 804 538 804 478z" />
        </clipPath>
        <clipPath id="cube">
          <path d="M386 406Q386 392 396 385L502 326Q516 319 530 326L638 387Q649 393 649 406V536Q649 548 640 555L548 606Q538 611 530 607 514 603 502 610 496 612 488 606L396 556Q386 550 386 540z" />
        </clipPath>
      </defs>

      <g fill="#cdcdcd" filter="url(#soft)">
        <path d="M386 552l104 68c12 18 50 16 58-4l18-8c10 8 24 0 54-20l-5-7 30-20-90-20z" />
        <path d="M815 555c15 38 75 60 130 58 80-3 130-45 118-88l-40-20z" />
        <path d="M1000 608l44-24 9 3-38 25c-8 4-18 1-15-4z" />
      </g>

      <g clipPath="url(#cube)">
        <path d="M380 310h280v310H380z" fill="#66625a" />
        <path d="M386 400l130 78v140L386 560z" fill="url(#leftFace)" />
        <path d="M649 400l-133 78v140l133-60z" fill="#50575a" />
        <path d="M392 392Q385 402 396 408L516 478 638 408Q650 402 640 392" fill="none" stroke="#77766e" strokeWidth="10" filter="url(#soft)" />
        <path d="M396 394L516 464 642 392" fill="none" stroke="url(#band)" strokeWidth="9" filter="url(#soft)" />
        <path d="M398 384L516 320 640 392" fill="none" stroke="#8c8c84" strokeWidth="2" filter="url(#soft)" />
        <path d="M388 402v145l110 62" fill="none" stroke="#45443f" strokeWidth="4" filter="url(#soft)" />
        <path d="M646 405v60" stroke="#47494a" strokeWidth="5" filter="url(#soft)" />

        <path d="M500 480h38v95l-10 36h-28z" fill="url(#column)" />
        <path d="M535 480h14v100h-14z" fill="#4a4c4b" filter="url(#soft)" />
        <path d="M487 472c0 24 62 28 62 0z" fill="#78746b" filter="url(#soft)" />
        <path d="M498 474c6 9 30 9 40 0z" fill="#b3aea3" filter="url(#soft)" />
        <path d="M491 480c8 17 46 18 54 0" fill="none" stroke="#4f4c46" strokeWidth="1.500" filter="url(#soft)" />
        <path d="M490 571c-1 24-2 32 8 42h42c8-6 9-24 9-41-6-1-9 1-11 4-8 10-28 8-34-1-3-4-8-6-14-4z" fill="#524f49" />
        <path d="M499 574v36M537 576v34" stroke="#3f3d39" strokeWidth="2" filter="url(#soft)" />
        <path d="M518 582v25" stroke="#6f6c64" strokeWidth="8" filter="url(#soft)" />
        <path d="M490 572c8-4 10 4 16 6 10 5 24 3 30-3 4-4 7-4 12-3" fill="none" stroke="#716e67" />

        <path d="M418 477Q418 468 427 471L460 491Q469 497 469 507V541Q467 547 459 543L425 524Q417 519 417 509z" fill="#3d3c38" />
        <path d="M434 475L460 491Q468 497 468 507V533L441 514Q434 509 434 500z" fill="#55534f" />
        <path d="M420 512l45 29" stroke="#7e796f" strokeWidth="5" filter="url(#soft)" />
        <path d="M418 477Q418 468 427 471L460 491Q469 497 469 507V541Q467 547 459 543L425 524Q417 519 417 509z" fill="none" stroke="#71716a" />
        <ellipse cx="583" cy="516" rx="23" ry="30" fill="#777771" stroke="#45443f" transform="rotate(15 583 516)" />
        <path d="M572 496c-10 12-10 30 4 42" fill="none" stroke="#aaa9a1" strokeWidth="6" filter="url(#soft)" />
      </g>

      <g clipPath="url(#body)">
        <path d="M800 280h270v310H800z" fill="url(#side)" />
        <path d="M800 530h270v60H800z" fill="url(#under)" />
        <path d="M804 480c4 60 60 103 130 103s128-43 131-103" fill="none" stroke="#45433e" strokeWidth="6" filter="url(#softer)" />
        <ellipse cx="934" cy="365" rx="130" ry="75" fill="url(#cone)" />
        <path d="M850 300C820 315 808 340 806 375c8 40 65 63 128 63 66 0 122-25 130-68-2-30-20-50-45-68" fill="none" stroke="#82847c" strokeWidth="4" filter="url(#soft)" />
        <path d="M890 437c70 7 125-9 155-40" fill="none" stroke="#a9a397" strokeWidth="3" filter="url(#soft)" />
      </g>
      <path d="M842 330C842 300 880 283 934 283s92 20 92 50c0 32-40 56-90 56-54 0-94-26-94-59z" fill="#858177" filter="url(#soft)" />
      <ellipse cx="934" cy="331" rx="88" ry="49" fill="#6b665e" />
      <path d="M905 386c30 8 70 4 95-15" stroke="#b6b1a5" strokeWidth="3" fill="none" filter="url(#soft)" />
      <path d="M850 308c12-18 48-25 84-25 42 0 74 9 86 28" fill="none" stroke="#8b8c84" strokeWidth="1.500" />

      <path d="M842 347Q846 344 851 347 868 367 917 383L913 390 889 438 886 448C858 444 836 434 814 415V400z" fill="#69665e" />
      <path d="M844 349Q848 346 852 350 872 376 911 388L887 434C857 430 833 417 815 397z" fill="#78736a" />
      <path d="M852 349C866 374 893 384 911 387" fill="none" stroke="#aaa395" strokeWidth="4" filter="url(#soft)" />
      <path d="M814 394c18 24 46 38 76 43" fill="none" stroke="#92938b" strokeWidth="4" filter="url(#soft)" />
      <path d="M852 346L913 378Q920 382 916 389L891 436 888 446C858 443 831 430 814 408" fill="none" stroke="#45433e" strokeWidth="2" />
      <path d="M846 344L913 376Q919 380 918 388L893 434V444Q890 452 884 450" fill="none" stroke="#777970" strokeWidth="1.500" />
      <path d="M813 405l1-12 28-46" fill="none" stroke="#56534e" />

      <path d="M813 440l16 10v25h-13z" fill="#24231f" />
      <path d="M828 452C846 464 864 469 878 470Q886 472 886 482V505Q886 512 877 511 850 507 828 492z" fill="#504e49" />
      <path d="M828 477c15 12 37 17 56 19v9q-2 5-10 4-23-2-46-16z" fill="#302e2a" />
      <path d="M830 488c16 11 34 17 52 17" fill="none" stroke="#aaa395" strokeWidth="3" filter="url(#soft)" />
      <path d="M828 452C846 464 864 469 878 470Q886 472 886 482V505Q886 512 877 511 850 507 828 492" fill="none" stroke="#7b7b73" strokeWidth="1.500" />

      <ellipse cx="1025" cy="486" rx="28" ry="35" fill="url(#knob)" stroke="#55544e" transform="rotate(18 1025 486)" />
      <path d="M1008 460q15-10 33 0" stroke="#b0aa9d" strokeWidth="4" fill="none" filter="url(#soft)" />
      <ellipse cx="1034" cy="491" rx="20" ry="28" fill="#5a5852" transform="rotate(18 1034 491)" />
      <path d="M1004 508c6 10 18 12 26 10" fill="none" stroke="#a8a296" />
    </svg>
  )
}

function ViewCube() {
  return (
    <svg viewBox="1410 95 84 90" className="absolute right-[6px] top-1 h-[90px] w-[84px]" aria-label="View cube">
      <defs><filter id="cubeShadow"><feGaussianBlur stdDeviation="3" /></filter></defs>
      <path d="M1426 158l25 10 26-10-10 14-16 7-15-7z" fill="#b5b5b5" filter="url(#cubeShadow)" />
      <path d="M1451 113V104" stroke="#62ea62" />
      <path d="M1427 156l-6 3" stroke="#7474ee" strokeWidth="2" />
      <path d="M1475 155l6 3" stroke="#f08080" strokeWidth="2" />
      <g stroke="#888" strokeWidth=".7">
        <path d="M1451 113l28 13-28 15-28-15z" fill="#f7f7f7" />
        <path d="M1423 126l28 15v32l-24-17z" fill="#ececec" />
        <path d="M1479 126l-28 15v32l24-17z" fill="#e6e6e6" />
      </g>
      <g fontFamily="Liberation Sans, sans-serif" textAnchor="middle">
        <text x="1451" y="107" fontSize="10" fill="#62ea62">Y</text>
        <text x="1417" y="165" fontSize="10" fill="#6a6af0">Z</text>
        <text x="1485" y="165" fontSize="10" fill="#f27474">X</text>
        <g fontSize="7" fill="#777">
          <text x="1451" y="128" transform="rotate(18 1451 126)">TOP</text>
          <text x="1437" y="152" transform="rotate(27 1437 150)">FRONT</text>
          <text x="1465" y="152" transform="rotate(-28 1465 150)">RIGHT</text>
        </g>
      </g>
    </svg>
  )
}

function NavBar() {
  return (
    <div className="absolute bottom-[5px] left-1/2 flex h-[19px] w-[187px] -translate-x-1/2 items-center justify-between bg-[#f4f4f4] px-[2px]">
      <button aria-label="Orbit" className="flex items-center gap-1"><Icon name="orbit" className="size-[14px]" /><Caret /></button>
      <button aria-label="Look at"><Icon name="lookAt" className="size-[13px]" /></button>
      <button aria-label="Pan"><Hand className="size-[14px] text-[#888]" /></button>
      <button aria-label="Zoom"><Icon name="zoom" className="size-[14px]" /></button>
      <button aria-label="Fit" className="flex items-center gap-[3px]"><Icon name="fit" className="size-[14px]" /><Caret /></button>
      <button aria-label="Display settings" className="flex items-center gap-[2px]"><Icon name="display" className="size-[14px]" /><Caret /></button>
      <button aria-label="Grid" className="flex items-center gap-[3px]"><Icon name="grid" className="size-3" /><Caret /></button>
      <button aria-label="Viewports" className="flex items-center gap-[2px]"><Icon name="viewports" className="size-[14px]" /><Caret /></button>
    </div>
  )
}

// s sketch, e extrude, f fillet, c chamfer
const codes: Record<string, string> = {
  b: 'solid', s: 'sketch', e: 'extrude', f: 'fillet', c: 'chamfer', o: 'patch', t: 'thicken', r: 'remove',
  m: 'combine', n: 'compPlus', y: 'cylinder', p: 'plane', j: 'pair',
}
const first = 'bsecsefseccsefcfseffsoetrfcmsefeffsefcsnn'.split('')
const second = 'ycfpseffsjeeffcfpsec'.split('')

function Features({ list, color, grow }: { list: string[]; color: string; grow: string }) {
  return (
    <div className={`flex flex-col ${grow}`}>
      <div className={`mx-[2px] h-[5px] ${color}`} />
      <div className="flex border-b border-[#b5b5b5]">
        {list.map((c, i) => (
          <button key={i} aria-label={codes[c]} className="flex h-5 flex-1 flex-col items-center">
            <Icon name={codes[c]} className="size-[14px] mt-px" />
            <span className="mt-auto h-1 w-px bg-[#aaa]" />
          </button>
        ))}
      </div>
    </div>
  )
}

function Timeline() {
  return (
    <footer className="flex h-[38px] items-center bg-[#f4f4f4]">
      <div className="flex w-[111px] items-center gap-[9px] pl-[7px]">
        {['first', 'prev', 'play', 'next', 'last'].map(n => (
          <button key={n} aria-label={n}><Icon name={n} className="size-[11px]" /></button>
        ))}
      </div>
      <div className="flex w-[1144px]">
        <Features list={first} color="bg-[#e38be6]" grow="flex-[41]" />
        <Features list={second} color="bg-[#5cdce0]" grow="flex-[20]" />
      </div>
      <svg viewBox="0 0 10 26" className="-ml-[5px] h-[26px] w-[10px]" aria-hidden="true">
        <path d="M0 0h10v3L6 7v19H4V7L0 3z" fill="#222" />
      </svg>
      <button aria-label="Timeline settings" className="ml-auto mr-[9px]">
        <FaCog className="size-[13px] text-[#666]" />
      </button>
    </footer>
  )
}

export default function App() {
  return (
    <div className="flex h-screen flex-col overflow-hidden bg-white font-['Lato','Liberation_Sans',sans-serif] text-[8px] leading-3 text-[#222]">
      <TitleBar />
      <Toolbar />
      <main className="relative flex flex-1 flex-col justify-between pb-[3px] pl-[3px] pt-1">
        <Scene />
        <Browser />
        <ViewCube />
        <section className="flex h-5 w-[235px] items-center border border-[#e4e4e4] bg-[#f4f4f4] pl-[21px] pr-2">
          <h2 className="flex-1 font-['Noto_Sans',sans-serif] text-[9px]">COMMENTS</h2>
          <button aria-label="Add comment">
            <svg viewBox="0 0 8 8" className="size-2"><path d="M4 1v6M1 4h6" stroke="#555" /></svg>
          </button>
        </section>
        <NavBar />
      </main>
      <Timeline />
    </div>
  )
}
